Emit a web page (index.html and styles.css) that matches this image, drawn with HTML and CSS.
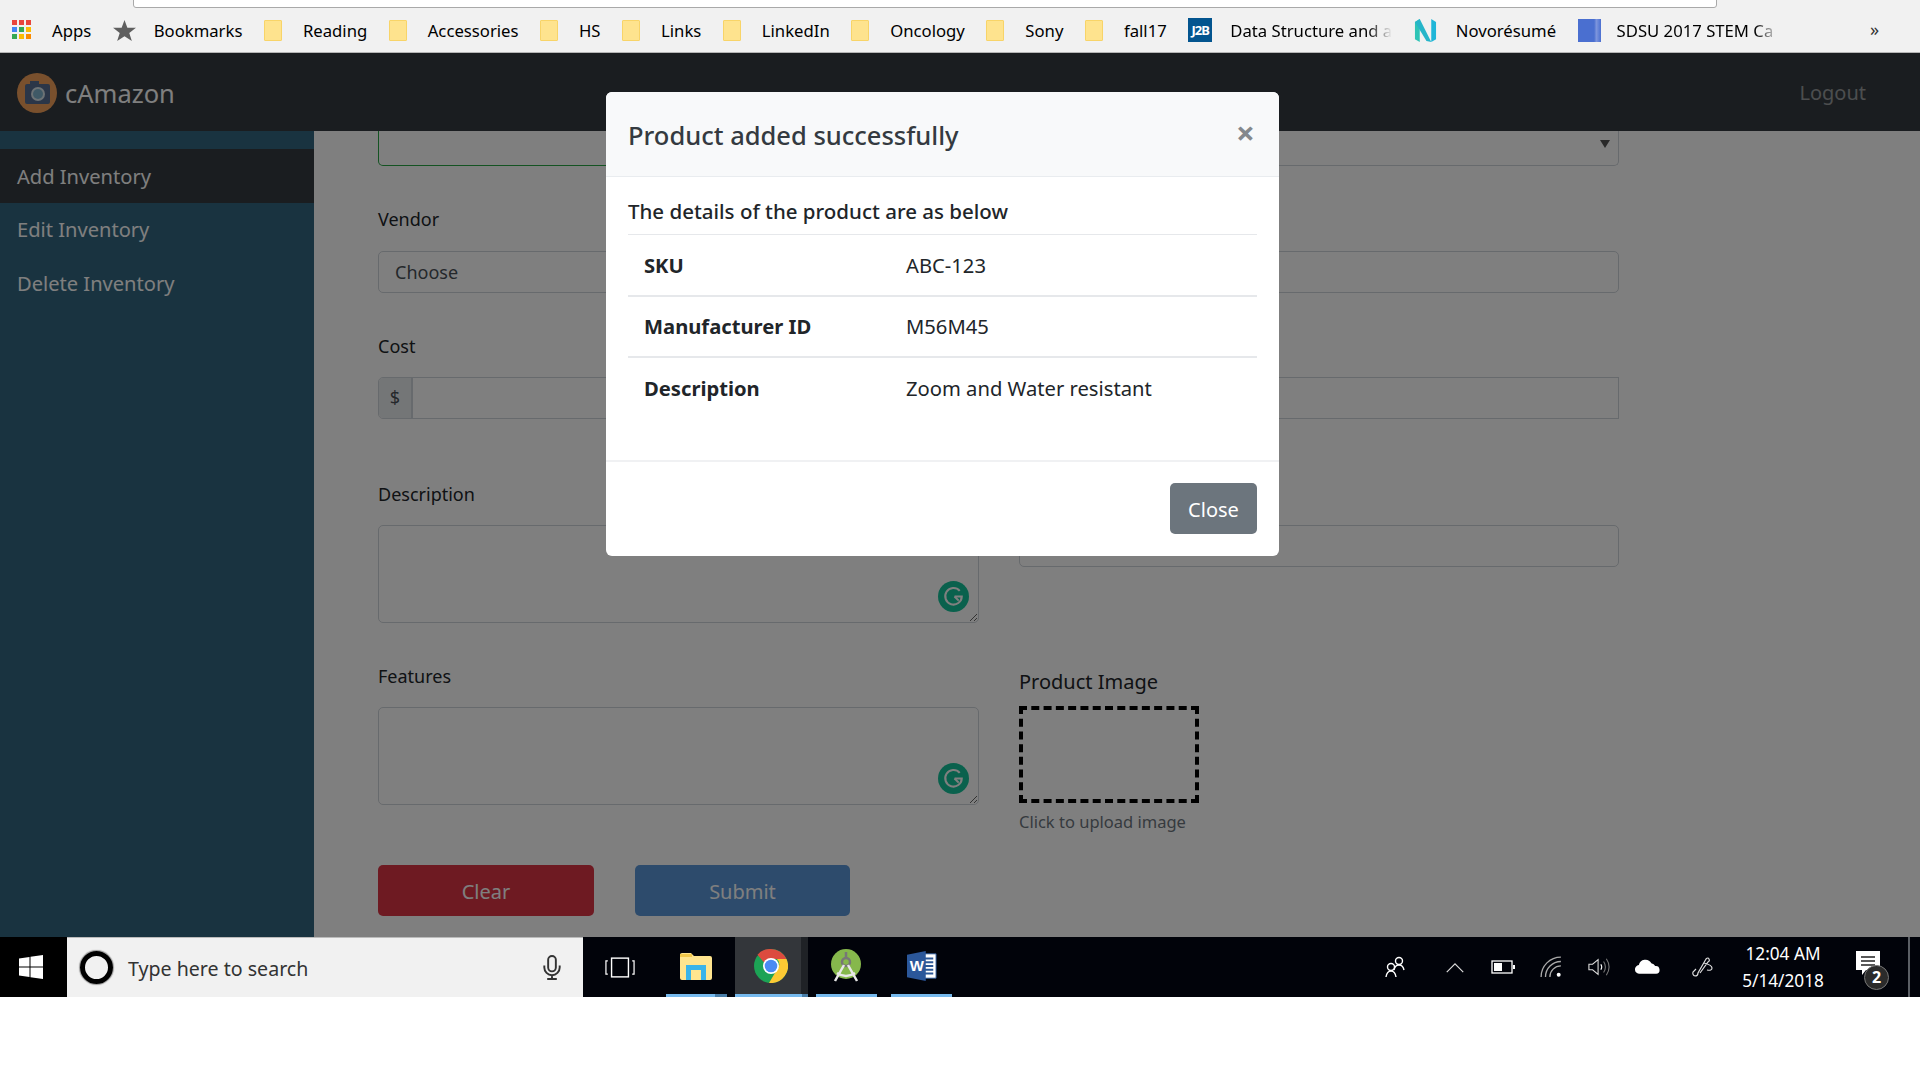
FILE: index.html
```html
<!DOCTYPE html>
<html lang="en">
<head>
<meta charset="utf-8">
<title>cAmazon</title>
<link rel="stylesheet" href="styles.css">
</head>
<body>
<nav class="bookmarks">
  <div class="omnibox"></div>
  <a class="bm"><svg class="ic-apps" viewBox="0 0 20 20"><rect x="0" y="0" width="5" height="5" fill="#e8453c"/><rect x="7" y="0" width="5" height="5" fill="#e8453c"/><rect x="14" y="0" width="5" height="5" fill="#e8453c"/><rect x="0" y="7" width="5" height="5" fill="#4285f4"/><rect x="7" y="7" width="5" height="5" fill="#34a853"/><rect x="14" y="7" width="5" height="5" fill="#fbbc05"/><rect x="0" y="14" width="5" height="5" fill="#34a853"/><rect x="7" y="14" width="5" height="5" fill="#fbbc05"/><rect x="14" y="14" width="5" height="5" fill="#fb8c00"/></svg>Apps</a>
  <a class="bm"><svg class="ic-star" viewBox="0 0 24 22"><path d="M12 0l3 8h9l-7 5.500 2.700 8.500L12 17l-7.700 5L7 13.500 0 8h9z" fill="#5f5f5f"/></svg>Bookmarks</a>
  <a class="bm"><span class="folder"></span>Reading</a>
  <a class="bm"><span class="folder"></span>Accessories</a>
  <a class="bm"><span class="folder"></span>HS</a>
  <a class="bm"><span class="folder"></span>Links</a>
  <a class="bm"><span class="folder"></span>LinkedIn</a>
  <a class="bm"><span class="folder"></span>Oncology</a>
  <a class="bm"><span class="folder"></span>Sony</a>
  <a class="bm"><span class="folder"></span>fall17</a>
  <a class="bm"><span class="ic-j2b">J2B</span><span class="fade">Data Structure and a</span></a>
  <a class="bm"><svg class="ic-n" viewBox="0 0 24 24"><path d="M1 3l5-3v24l-5-3z" fill="#2ec4b6"/><path d="M6 0l12 24-5-1L1 3z" fill="#26b5c9"/><path d="M18 0l5 3v18l-5 3z" fill="#1fb6d8"/></svg>Novorésumé</a>
  <a class="bm"><span class="ic-doc"></span><span class="fade">SDSU 2017 STEM Ca</span></a>
  <span class="more">»</span>
</nav>

<div class="app">
  <header class="topbar">
    <a class="brand"><svg class="logo" viewBox="0 0 40 40"><circle cx="20" cy="20" r="20" fill="#f2a05a"/><rect x="8" y="11" width="25" height="20" rx="2" fill="#566d90"/><rect x="13" y="8" width="9" height="5" fill="#566d90"/><circle cx="21" cy="21" r="7" fill="#d8e4ea"/><circle cx="21" cy="21" r="5" fill="#7fb2cc"/></svg>cAmazon</a>
    <a class="logout">Logout</a>
  </header>
  <div class="content">
    <aside class="sidebar">
      <a class="side-item active">Add Inventory</a>
      <a class="side-item">Edit Inventory</a>
      <a class="side-item">Delete Inventory</a>
    </aside>
    <main class="main">
      <div class="row">
        <div class="clipped valid"></div>
        <div class="clipped arrowed"></div>
      </div>
      <div class="row row-vendor">
        <div><label class="lbl lbl-wide">Vendor</label><div class="control arrowless">Choose</div></div>
        <div><div class="lbl lbl-wide"></div><div class="control"></div></div>
      </div>
      <div class="row row-cost">
        <div><label class="lbl lbl-up">Cost</label><div class="group"><span class="addon">$</span><span class="group-input"></span></div></div>
        <div><div class="lbl"></div><div class="control square"></div></div>
      </div>
      <div class="row row-desc">
        <div><label class="lbl lbl-mid">Description</label>
          <div class="area"><textarea class="textarea"></textarea>
            <svg class="grammarly" viewBox="0 0 30 30"><circle cx="15" cy="15" r="15" fill="#15c39a"/><path d="M21 9.500A8 8 0 1 0 23 15h-7" fill="none" stroke="#fff" stroke-width="2"/><path d="M16 15l4 4" stroke="#fff" stroke-width="2"/></svg></div></div>
        <div><div class="lbl lbl-mid"></div><div class="control"></div></div>
      </div>
      <div class="row row-feat">
        <div><label class="lbl lbl-up">Features</label>
          <div class="area"><textarea class="textarea"></textarea>
            <svg class="grammarly" viewBox="0 0 30 30"><circle cx="15" cy="15" r="15" fill="#15c39a"/><path d="M21 9.500A8 8 0 1 0 23 15h-7" fill="none" stroke="#fff" stroke-width="2"/><path d="M16 15l4 4" stroke="#fff" stroke-width="2"/></svg></div></div>
        <div class="upload">
          <div class="upload-title">Product Image</div>
          <div class="dropzone"></div>
          <small class="hint">Click to upload image</small>
        </div>
      </div>
      <div class="actions">
        <button class="btn btn-clear">Clear</button>
        <button class="btn btn-submit">Submit</button>
      </div>
    </main>
  </div>

  <div class="backdrop">
    <section class="modal">
      <div class="modal-head">
        <h5 class="modal-title">Product added successfully</h5>
        <span class="modal-x">×</span>
      </div>
      <div class="modal-body">
        <p class="intro">The details of the product are as below</p>
        <table class="details">
          <tr><th>SKU</th><td>ABC-123</td></tr>
          <tr><th>Manufacturer ID</th><td>M56M45</td></tr>
          <tr><th>Description</th><td>Zoom and Water resistant</td></tr>
        </table>
      </div>
      <div class="modal-foot"><button class="btn-close">Close</button></div>
    </section>
  </div>
</div>

<footer class="taskbar">
  <div class="start"><svg class="ic-win" viewBox="0 0 24 24"><path d="M0 3.500L10.500 2v9.500H0zM11.500 1.800L24 0v11.500H11.500zM0 12.500h10.500V22L0 20.500zM11.500 12.500H24V24l-12.500-1.800z" fill="#fff"/></svg></div>
  <div class="search">
    <span class="cortana"></span>
    <span class="search-text">Type here to search</span>
    <svg class="ic-mic" viewBox="0 0 18 26"><rect x="5" y="1" width="8" height="16" rx="4" fill="none" stroke="#333" stroke-width="2"/><path d="M1 11v2a8 8 0 0 0 16 0v-2M9 21v4M4 25h10" fill="none" stroke="#333" stroke-width="2"/></svg>
  </div>
  <div class="task task-view"><svg viewBox="0 0 32 22" class="ic-tv"><rect x="7" y="1" width="18" height="20" fill="none" stroke="#fff" stroke-width="1.500"/><path d="M3 4H1v14h2M29 4h2v14h-2" fill="none" stroke="#fff" stroke-width="1.300"/></svg></div>
  <div class="task task-folder"><svg viewBox="0 0 32 28" class="ic-32"><path d="M0 3a2 2 0 0 1 2-2h9l3 3h16a2 2 0 0 1 2 2v20a2 2 0 0 1-2 2H2a2 2 0 0 1-2-2z" fill="#ffe58f"/><path d="M0 2h12v3H0z" fill="#f2c84b"/><path d="M6 13h20v15h-5V18H11v10H6z" fill="#39b4ea"/></svg></div>
  <div class="task task-chrome"><svg viewBox="0 0 34 34" class="ic-34"><circle cx="17" cy="17" r="17" fill="#1ca355"/><path d="M17 0a17 17 0 0 1 15.500 10H17a7 7 0 0 0-6.500 4L3.500 5.700A17 17 0 0 1 17 0z" fill="#dc4b3e"/><path d="M32.500 10A17 17 0 0 1 15 33.900l8-13.400A7 7 0 0 0 23 10z" fill="#fcc934"/><circle cx="17" cy="17" r="8" fill="#fff"/><circle cx="17" cy="17" r="6.300" fill="#4a8af4"/></svg></div>
  <div class="task task-studio"><svg viewBox="0 0 32 34" class="ic-34"><circle cx="15" cy="15" r="15" fill="#86b84c"/><circle cx="15" cy="13" r="4" fill="none" stroke="#777" stroke-width="2.500"/><path d="M15 3v6" stroke="#777" stroke-width="2.500"/><path d="M13 16L4 32M17 16l9 16M6 24q9 6 18 0" fill="none" stroke="#e8e8e8" stroke-width="2.500"/></svg></div>
  <div class="task task-word"><svg viewBox="0 0 32 32" class="ic-32"><path d="M14 3h17v26H14z" fill="#fff" stroke="#2b5797"/><path d="M18 8h10M18 12h10M18 16h10M18 20h10M18 24h10" stroke="#2b5797" stroke-width="2"/><path d="M0 4l20-4v32L0 28z" fill="#2b579a"/><text x="3" y="21" class="word-w">W</text></svg></div>

  <div class="tray">
    <span class="slot slot-people"><svg viewBox="0 0 22 22" class="ic-tray"><circle cx="15" cy="5" r="3.500" fill="none" stroke="#fff" stroke-width="1.400"/><path d="M10 14q1-5 5-5t5 5" fill="none" stroke="#fff" stroke-width="1.400"/><circle cx="7" cy="11" r="3.500" fill="none" stroke="#fff" stroke-width="1.400"/><path d="M2 21q1-6 5-6t5 6" fill="none" stroke="#fff" stroke-width="1.400"/></svg></span>
    <span class="slot"><svg viewBox="0 0 20 12" class="ic-chev"><path d="M1 11l9-9 9 9" fill="none" stroke="#ddd" stroke-width="1.300"/></svg></span>
    <span class="slot"><svg viewBox="0 0 24 14" class="ic-batt"><rect x="1" y="1" width="20" height="12" fill="none" stroke="#fff" stroke-width="1.300"/><rect x="3" y="3" width="8" height="8" fill="#fff"/><rect x="22" y="5" width="2" height="4" fill="#fff"/></svg></span>
    <span class="slot"><svg viewBox="0 0 20 20" class="ic-tray"><path d="M1 19A18 18 0 0 1 19 1M5 19A14 14 0 0 1 19 5M9 19A10 10 0 0 1 19 9" fill="none" stroke="#aaa" stroke-width="1.200"/><circle cx="17" cy="17" r="1.800" fill="#fff"/></svg></span>
    <span class="slot"><svg viewBox="0 0 24 22" class="ic-tray"><path d="M1 8h4l6-5v16l-6-5H1z" fill="none" stroke="#ddd" stroke-width="1.200"/><path d="M14 8q2 3 0 6" fill="none" stroke="#fff" stroke-width="1.200"/><path d="M17 5q4 6 0 12M20 2q6 9 0 18" fill="none" stroke="#777" stroke-width="1.200"/></svg></span>
    <span class="slot"><svg viewBox="0 0 26 18" class="ic-cloud"><path d="M5 16a4.500 4.500 0 0 1-1-9 7 7 0 0 1 13-2 5 5 0 0 1 4 3 4 4 0 0 1 1 8z" fill="#fff"/></svg></span>
    <span class="slot slot-pen"><svg viewBox="0 0 22 22" class="ic-tray"><path d="M4 20a3 3 0 0 1-2-4l3-3M4 20q3 0 3-3L15 3q2-2 3 0t-1 3L9 17M13 7q8 2 8 5t-5 2" fill="none" stroke="#ddd" stroke-width="1.200"/></svg></span>
    <div class="clock"><span>12:04 AM</span><span>5/14/2018</span></div>
    <div class="notif"><svg viewBox="0 0 24 24" class="ic-notif"><path d="M0 0h24v19H10l-4 5v-5H0z" fill="#fff"/><path d="M5 6h14M5 10h14M5 14h14" stroke="#222" stroke-width="1.300"/></svg><span class="badge">2</span></div>
    <span class="tray-line"></span>
  </div>
</footer>
</body>
</html>
```
FILE: styles.css
```css
* { box-sizing: border-box; }
html, body { margin: 0; padding: 0; background: #fff; height: 1080px; overflow: hidden; }
body { font-family: "Noto Sans", "Open Sans", sans-serif; color: #212529; }

/* bookmarks bar */
.bookmarks { position: relative; height: 53px; background: #f1f1f1; border-bottom: 1px solid #b5b5b5; display: flex; align-items: center; padding: 0 0 0 12px; gap: 21.500px; font-size: 16.700px; color: #000; }
.omnibox { position: absolute; left: 133px; top: -4px; width: 1584px; height: 12px; background: #fff; border: 1px solid #a9a9a9; border-radius: 3px; }
.bm { display: flex; align-items: center; gap: 21px; white-space: nowrap; margin-top: 8px; }
.bm:first-of-type { gap: 20px; }
.ic-apps { width: 20px; height: 20px; flex: none; }
.ic-star { width: 23px; height: 21px; flex: none; margin-right: -3px; }
.folder { width: 18px; height: 21px; flex: none; background: #fee38e; border: 1px solid #f8d468; border-radius: 1px; }
.ic-j2b { width: 24px; height: 24px; flex: none; background: #03558f; color: #fff; font-size: 13px; font-weight: 700; line-height: 24px; text-align: center; letter-spacing: -1px; margin-right: -3px; }
.ic-n { width: 23px; height: 23px; flex: none; margin-right: -2px; }
.ic-doc { width: 23px; height: 23px; flex: none; background: linear-gradient(90deg, #4a6fd0 0 70%, #7d95dd 80%, #4a6fd0); margin-right: -5px; }
.fade { display: block; min-width: 162px; -webkit-mask-image: linear-gradient(90deg, #000 85%, transparent); mask-image: linear-gradient(90deg, #000 85%, transparent); }
.more { position: absolute; left: 1870px; top: 17px; font-size: 18px; color: #333; }

/* app */
.app { position: relative; height: 884px; }
.topbar { height: 78px; background: #343a40; display: flex; align-items: center; justify-content: space-between; padding: 1px 54px 0 17px; }
.brand { display: flex; align-items: center; gap: 8px; font-size: 25.500px; color: #fff; }
.logo { width: 40px; height: 40px; flex: none; }
.logout { font-size: 20px; color: rgba(255,255,255,.5); }
.content { display: flex; height: 806px; background: #fff; }
.sidebar { width: 314px; flex: none; background: #326680; padding-top: 18px; display: flex; flex-direction: column; }
.side-item { height: 53.500px; display: flex; align-items: center; padding: 1px 0 0 17px; font-size: 20.100px; color: #fff; }
.side-item.active { background: #343a40; }
.main { flex: 1; padding: 0 0 0 64px; }

.row { display: grid; grid-template-columns: 601px 600px; column-gap: 40px; align-items: start; }
.row-vendor { margin-top: 38px; }
.row-cost { margin-top: 39px; }
.row-desc { margin-top: 60px; }
.row-feat { margin-top: 39px; }

.clipped { position: relative; height: 35px; border: 1px solid #ced4da; border-top: 0; border-radius: 0 0 5px 5px; }
.valid { border-color: #28a745; }
.arrowed::after { content: ""; position: absolute; right: 8px; top: 9px; border: 5px solid transparent; border-top: 8px solid #555; border-bottom: 0; }
.lbl { display: block; height: 30px; margin-bottom: 15px; line-height: 30px; font-size: 18px; color: #212529; }
.lbl-wide { margin-bottom: 17px; }
.lbl-mid { margin-bottom: 16px; }
.lbl-up { line-height: 28px; }
.control { height: 42px; border: 1px solid #ced4da; border-radius: 5px; padding: 0 16px; line-height: 40px; font-size: 18px; color: #495057; }
.square { border-radius: 0; }
.group { display: flex; height: 42px; border: 1px solid #ced4da; border-radius: 5px; }
.addon { width: 34px; background: #e9ecef; border-right: 2px solid #ced4da; text-align: center; line-height: 38px; font-size: 18px; color: #495057; border-radius: 4px 0 0 4px; }
.group-input { flex: 1; }
.area { position: relative; height: 98px; }
.textarea { display: block; width: 100%; height: 98px; border: 1px solid #ced4da; border-radius: 5px; background: #fff; padding: 0; margin: 0; outline: 0; }
.grammarly { position: absolute; right: 10px; top: 56px; width: 31px; height: 31px; }

.upload-title { margin-top: 5px; height: 30px; line-height: 30px; font-size: 20px; color: #212529; }
.dropzone { margin-top: 9px; width: 180px; height: 97px; border: 4px dashed #000; }
.hint { display: block; margin-top: 7px; line-height: 24px; font-size: 16.500px; color: #6c757d; }

.actions { display: flex; gap: 41px; margin-top: 31px; }
.btn { height: 51px; border: 0; border-radius: 5px; padding-top: 2px; color: #fff; font: 20px "Noto Sans", sans-serif; }
.btn-clear { width: 216px; background: #dc3545; }
.btn-submit { width: 215px; background: #5b97d8; }

/* modal */
.backdrop { position: absolute; inset: 0; background: rgba(0,0,0,.5); padding: 39px 0 0 606px; }
.modal { width: 673px; height: 464px; background: #fff; border-radius: 6px; overflow: hidden; display: flex; flex-direction: column; }
.modal-head { height: 85px; flex: none; background: #f8f9fa; border-bottom: 1px solid #e9ecef; display: flex; justify-content: space-between; align-items: flex-start; padding: 25px 22px 0 22px; }
.modal-title { margin: 0; font-size: 25.500px; font-weight: 500; line-height: 37px; color: #343a40; }
.modal-x { font-size: 33px; line-height: 32px; font-weight: 700; color: #84888c; margin-right: 2px; }
.modal-body { height: 283px; flex: none; padding: 20px 22px 0; }
.intro { margin: 0; height: 37px; line-height: 28px; font-size: 20.500px; font-weight: 500; color: #212529; }
.details { width: 100%; border-collapse: collapse; font-size: 20.200px; }
.details th, .details td { height: 61px; padding: 0 0 0 16px; text-align: left; border-top: 2px solid #e6e8eb; vertical-align: middle; font-weight: 400; color: #212529; }
.details th { width: 262px; font-weight: 700; }
.details tr:first-child th, .details tr:first-child td { border-top-width: 1px; }
.modal-foot { flex: 1; border-top: 2px solid #f0f1f3; display: flex; justify-content: flex-end; padding: 21px 22px 0; }
.btn-close { width: 87px; height: 51px; border: 0; border-radius: 5px; padding-top: 2px; background: #6c757d; color: #fff; font: 20px "Noto Sans", sans-serif; }

/* taskbar */
.taskbar { height: 60px; background: #01030a; display: flex; color: #fff; }
.start { width: 67px; background: #000; display: flex; align-items: center; justify-content: center; flex: none; padding-right: 5px; }
.ic-win { width: 24px; height: 24px; }
.search { width: 516px; flex: none; background: #f1f1f1; display: flex; align-items: center; padding-left: 13px; color: #333; border-top: 1px solid #bbb; }
.cortana { width: 33px; height: 33px; border-radius: 50%; border: 5px solid #000; box-shadow: 0 0 1px 1px #999; flex: none; }
.search-text { margin: 2px 0 0 15px; font-size: 19.600px; }
.ic-mic { width: 18px; height: 25px; margin-left: auto; margin-right: 22px; }
.task { position: relative; height: 60px; display: flex; align-items: center; justify-content: center; flex: none; border-bottom: 3px solid #76b9ed; }
.task-view { width: 83px; border-bottom: 0; padding-right: 9px; }
.ic-tv { width: 30px; height: 21px; }
.task-folder { width: 61px; border-image: linear-gradient(90deg, #76b9ed 0 48px, #4a7ea8 48px) 1; padding-right: 1px; }
.task-chrome { width: 73px; margin-left: 8px; padding-right: 2px; background: linear-gradient(90deg, #33363a 0 66px, #1f2226 66px); border-image: linear-gradient(90deg, #76b9ed 0 66px, #4a7ea8 66px) 1; }
.task-studio { width: 61px; margin-left: 8px; }
.task-word { width: 61px; margin-left: 14px; }
.ic-32 { width: 32px; height: 30px; }
.ic-34 { width: 34px; height: 34px; }
.word-w { font: 700 16px "Liberation Sans", sans-serif; fill: #fff; }

.tray { margin-left: auto; display: flex; align-items: center; padding-right: 10px; }
.slot { width: 48px; display: flex; align-items: center; justify-content: center; }
.slot-people { margin-right: 12px; }
.slot-pen { margin-left: 7px; }
.ic-tray { width: 22px; height: 22px; }
.ic-chev { width: 20px; height: 11px; }
.ic-batt { width: 24px; height: 14px; }
.ic-cloud { width: 25px; height: 18px; }
.clock { width: 90px; margin-left: 12px; display: flex; flex-direction: column; align-items: center; font-size: 17.200px; line-height: 27px; }
.notif { position: relative; width: 48px; height: 48px; margin-left: 16px; }
.ic-notif { position: absolute; left: 12px; top: 8px; width: 24px; height: 24px; }
.badge { position: absolute; left: 20px; top: 22px; width: 25px; height: 25px; border-radius: 50%; background: #2b2b2b; border: 1px solid #777; font-size: 16px; font-weight: 700; line-height: 23px; text-align: center; }
.tray-line { width: 2px; height: 60px; margin-left: 16px; background: #5b5f65; }
```
